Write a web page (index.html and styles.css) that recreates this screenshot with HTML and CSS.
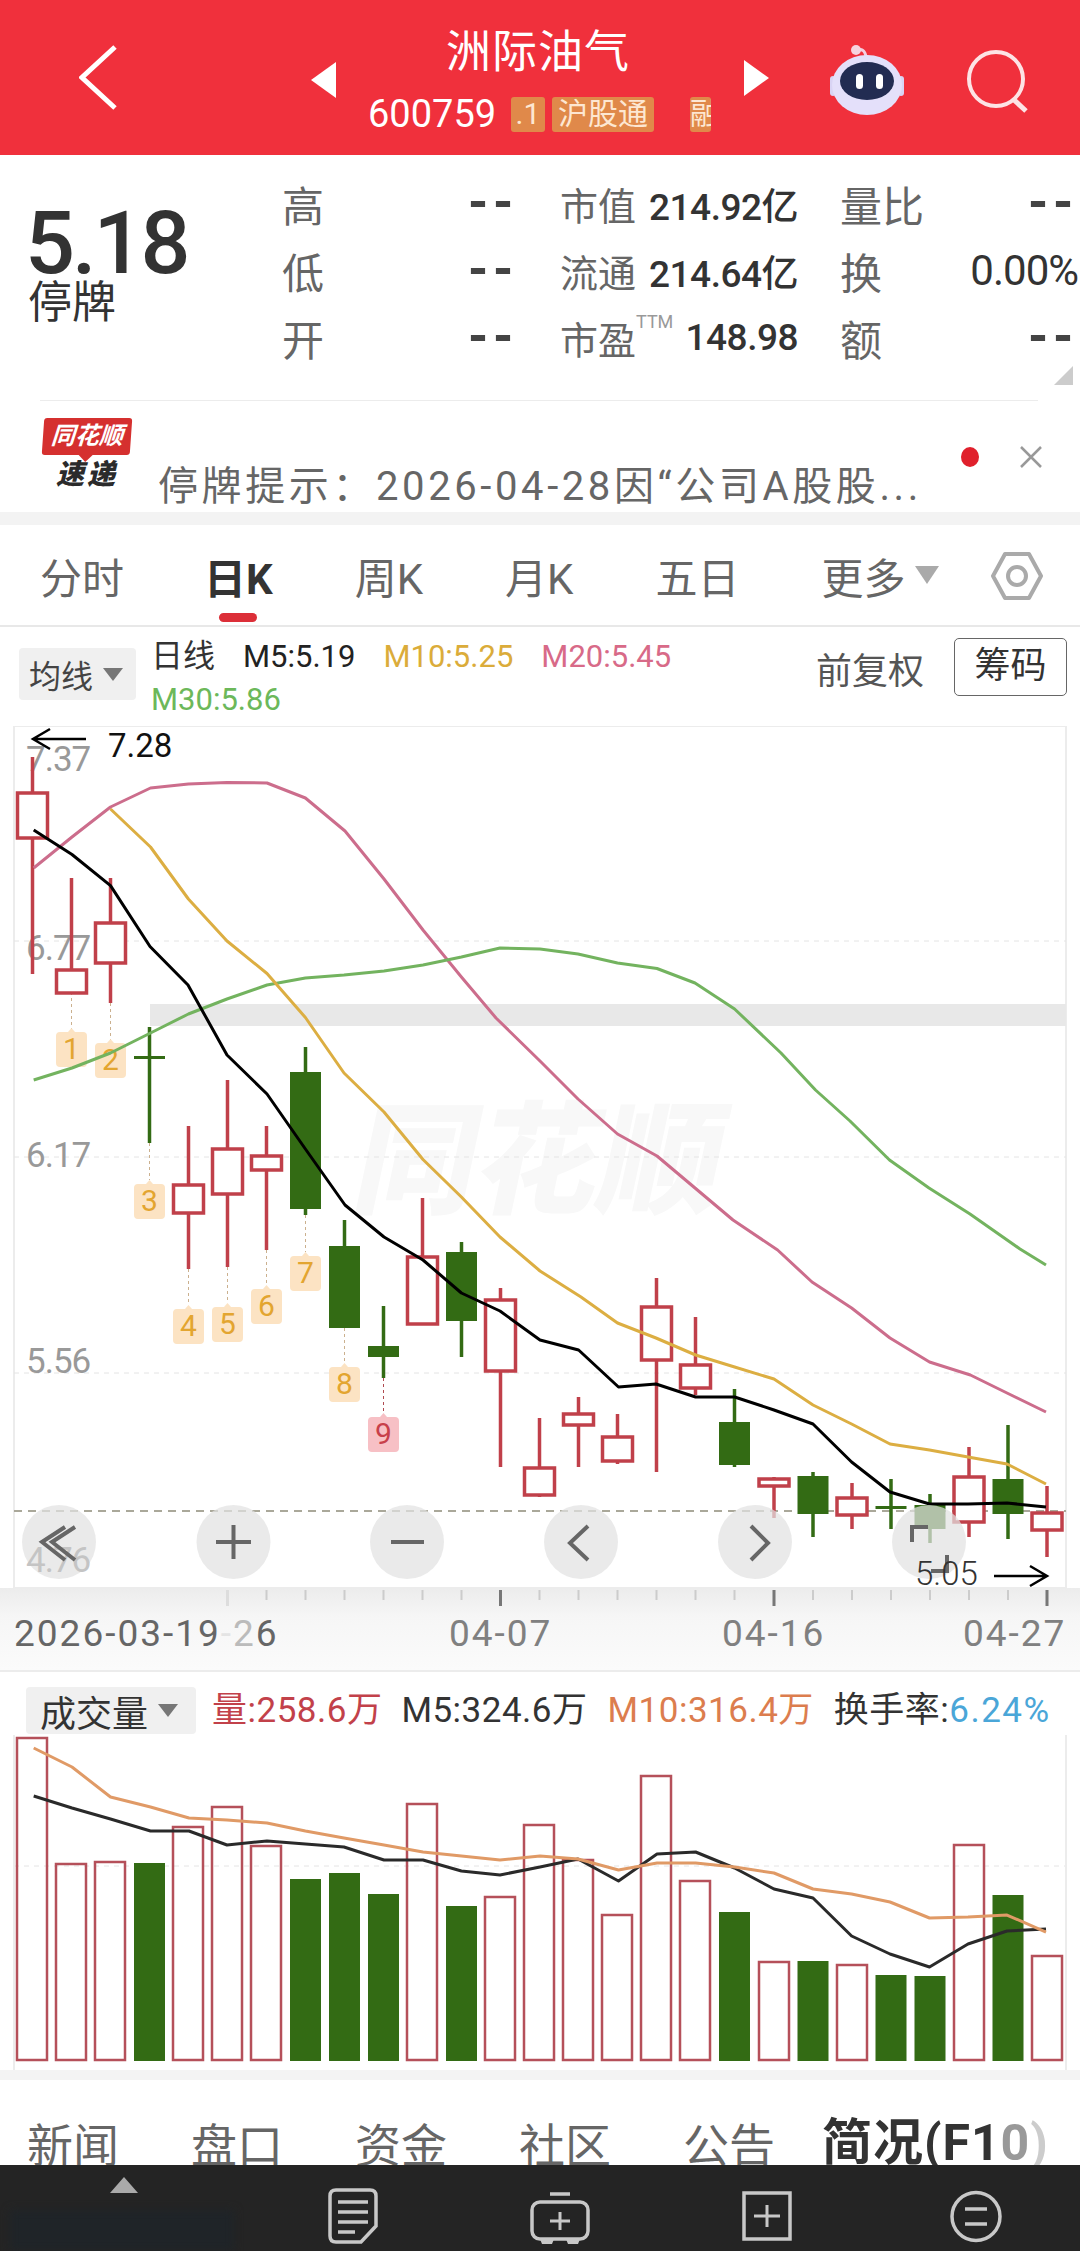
FILE: index.html
```html
<!DOCTYPE html>
<html lang="zh-CN">
<head>
  <meta charset="UTF-8">
  <meta name="viewport" content="width=device-width, initial-scale=1">
  <title>洲际油气 600759</title>
  <link rel="stylesheet" href="styles.css">
</head>
<body>
  <header class="topbar">
    <svg class="back" width="38" height="65" viewBox="0 0 38 65"><path d="M36 2 L3 32.5 L36 63" fill="none" stroke="#fff" stroke-width="5"/></svg>
    <svg class="prev" width="25" height="36" viewBox="0 0 25 36"><path d="M25 0 V36 L0 18 Z" fill="#fff"/></svg>
    <div class="stock">
      <div class="stock-name">洲际油气</div>
      <div class="stock-code">
        <span class="code">600759</span>
        <span class="tag tag-a">.1</span>
        <span class="tag tag-b">沪股通</span>
        <span class="tag tag-c">融</span>
      </div>
    </div>
    <svg class="next" width="25" height="36" viewBox="0 0 25 36"><path d="M0 0 V36 L25 18 Z" fill="#fff"/></svg>
    <svg class="robot" width="76" height="74" viewBox="0 0 76 74">
      <path d="M28 9 C32 6 36 8 37 15" fill="none" stroke="#f3cfe0" stroke-width="3"/>
      <circle cx="27" cy="8" r="5" fill="#f6d3df"/>
      <rect x="1" y="34" width="6" height="20" rx="3" fill="#d9d4f4"/>
      <rect x="69" y="34" width="6" height="20" rx="3" fill="#d9d4f4"/>
      <ellipse cx="38" cy="43" rx="35" ry="30" fill="#e4e0fa"/>
      <ellipse cx="38" cy="39" rx="27" ry="19" fill="#222c52"/>
      <rect x="27" y="32" width="7" height="15" rx="3.5" fill="#fff"/>
      <rect x="47" y="32" width="7" height="15" rx="3.5" fill="#fff"/>
    </svg>
    <svg class="search" width="64" height="64" viewBox="0 0 64 64"><circle cx="30" cy="30" r="27" fill="none" stroke="#fde3e5" stroke-width="4"/><path d="M47 50 L60 62" stroke="#fde3e5" stroke-width="5"/></svg>
  </header>

  <section class="quote">
    <div class="price">
      <div class="price-num">5.18</div>
      <div class="price-state">停牌</div>
    </div>
    <div class="stats">
      <div class="cell"><span class="lab">高</span><span class="dash">--</span></div>
      <div class="cell"><span class="lab-sm">市值</span><span class="val">214.92亿</span></div>
      <div class="cell"><span class="lab">量比</span><span class="dash">--</span></div>
      <div class="cell"><span class="lab">低</span><span class="dash">--</span></div>
      <div class="cell"><span class="lab-sm">流通</span><span class="val">214.64亿</span></div>
      <div class="cell"><span class="lab">换</span><span class="val val-big">0.00%</span></div>
      <div class="cell"><span class="lab">开</span><span class="dash">--</span></div>
      <div class="cell"><span class="lab-sm">市盈<sup class="ttm">TTM</sup></span><span class="val">148.98</span></div>
      <div class="cell"><span class="lab">额</span><span class="dash">--</span></div>
    </div>
    <span class="corner"></span>
  </section>

  <section class="notice">
    <div class="logo">
      <div class="logo-top">同花顺</div>
      <div class="logo-bot">速递</div>
    </div>
    <div class="notice-text">停牌提示：2026-04-28因“公司A股股...</div>
    <span class="notice-dot"></span>
    <svg class="notice-x" width="24" height="24" viewBox="0 0 24 24"><path d="M2 2 L22 22 M22 2 L2 22" stroke="#999" stroke-width="2.5"/></svg>
  </section>

  <div class="band"></div>

  <nav class="tabs">
    <span class="tab">分时</span>
    <span class="tab active">日K</span>
    <span class="tab">周K</span>
    <span class="tab">月K</span>
    <span class="tab">五日</span>
    <span class="tab more">更多<i class="tri"></i></span>
    <svg class="hex" width="52" height="50" viewBox="0 0 52 50"><path d="M14 3 H38 L50 25 L38 47 H14 L2 25 Z" fill="none" stroke="#aaa" stroke-width="4" stroke-linejoin="round"/><circle cx="26" cy="25" r="9" fill="none" stroke="#aaa" stroke-width="4"/></svg>
  </nav>

  <section class="legend">
    <div class="chip">均线<i class="tri tri-dark"></i></div>
    <div class="legend-text">
      <span class="leg leg-title">日线</span>
      <span class="leg leg-m5">M5:5.19</span>
      <span class="leg leg-m10">M10:5.25</span>
      <span class="leg leg-m20">M20:5.45</span>
      <span class="leg leg-m30">M30:5.86</span>
    </div>
    <span class="adjust">前复权</span>
    <span class="chips-btn">筹码</span>
  </section>

  <svg class="kchart" width="1080" height="944" viewBox="0 726 1080 944">
    <defs>
      <linearGradient id="axisbg" x1="0" y1="0" x2="0" y2="1">
        <stop offset="0" stop-color="#ececec"/>
        <stop offset="0.35" stop-color="#f6f6f6"/>
        <stop offset="1" stop-color="#fbfbfb"/>
      </linearGradient>
      <path id="flag" d="M4 4 L12 4 L15.5 0 L19 4 L27 4 Q31 4 31 8 V35 Q31 39 27 39 H4 Q0 39 0 35 V8 Q0 4 4 4 Z"/>
    </defs>

    <rect class="axis-bg" x="0" y="1588" width="1080" height="82"/>
    <rect class="frame" x="14" y="726" width="1052" height="862"/>
    <rect class="band-sr" x="150" y="1004" width="916" height="22"/>
    <text class="watermark" x="350" y="1204" transform="skewX(-12) translate(255 0)">同花顺</text>

    <line class="grid" x1="14" y1="941" x2="1066" y2="941"/>
    <line class="grid" x1="14" y1="1157" x2="1066" y2="1157"/>
    <line class="grid" x1="14" y1="1373" x2="1066" y2="1373"/>
    <line class="base" x1="14" y1="1511" x2="1066" y2="1511"/>

    <text class="ylab" x="26" y="771">7.37</text>
    <text class="ylab" x="26" y="960">6.77</text>
    <text class="ylab" x="26" y="1167">6.17</text>
    <text class="ylab" x="26" y="1373">5.56</text>

    <line class="link" x1="71.5" y1="992" x2="71.5" y2="1030"/>
    <line class="link" x1="110.5" y1="1003" x2="110.5" y2="1040"/>
    <line class="link" x1="149.5" y1="1143" x2="149.5" y2="1180"/>
    <line class="link" x1="188.5" y1="1269" x2="188.5" y2="1305"/>
    <line class="link" x1="227.5" y1="1267" x2="227.5" y2="1303"/>
    <line class="link" x1="266.5" y1="1250" x2="266.5" y2="1285"/>
    <line class="link" x1="305.5" y1="1215" x2="305.5" y2="1252"/>
    <line class="link" x1="344.5" y1="1328" x2="344.5" y2="1363"/>
    <line class="link link-red" x1="383.5" y1="1378" x2="383.5" y2="1413"/>

    <use class="flag" href="#flag" x="56" y="1028"/>
    <use class="flag" href="#flag" x="95" y="1039"/>
    <use class="flag" href="#flag" x="134" y="1180"/>
    <use class="flag" href="#flag" x="173" y="1305"/>
    <use class="flag" href="#flag" x="212" y="1303"/>
    <use class="flag" href="#flag" x="251" y="1285"/>
    <use class="flag" href="#flag" x="290" y="1252"/>
    <use class="flag" href="#flag" x="329" y="1363"/>
    <use class="flag flag-red" href="#flag" x="368" y="1413"/>
    <text class="flagnum" x="71.5" y="1059">1</text>
    <text class="flagnum" x="110.5" y="1070">2</text>
    <text class="flagnum" x="149.5" y="1211">3</text>
    <text class="flagnum" x="188.5" y="1336">4</text>
    <text class="flagnum" x="227.5" y="1334">5</text>
    <text class="flagnum" x="266.5" y="1316">6</text>
    <text class="flagnum" x="305.5" y="1283">7</text>
    <text class="flagnum" x="344.5" y="1394">8</text>
    <text class="flagnum flagnum-red" x="383.5" y="1444">9</text>

    <!-- candles: wick then body -->
    <g class="up"><line x1="32.5" y1="757" x2="32.5" y2="974"/><rect x="17.5" y="793" width="30" height="45"/></g>
    <g class="up"><line x1="71.5" y1="878" x2="71.5" y2="970"/><rect x="56.5" y="970" width="30" height="23"/></g>
    <g class="up"><line x1="110.5" y1="878" x2="110.5" y2="1003"/><rect x="95.5" y="923" width="30" height="40"/></g>
    <g class="down"><line x1="149.5" y1="1027" x2="149.5" y2="1143"/><rect x="134" y="1056" width="31" height="3"/></g>
    <g class="up"><line x1="188.5" y1="1126" x2="188.5" y2="1269"/><rect x="173.5" y="1185" width="30" height="28"/></g>
    <g class="up"><line x1="227.5" y1="1080" x2="227.5" y2="1267"/><rect x="212.5" y="1149" width="30" height="45"/></g>
    <g class="up"><line x1="266.5" y1="1126" x2="266.5" y2="1250"/><rect x="251.5" y="1156" width="30" height="14"/></g>
    <g class="down"><line x1="305.5" y1="1047" x2="305.5" y2="1215"/><rect x="290" y="1072" width="31" height="137"/></g>
    <g class="down"><line x1="344.5" y1="1220" x2="344.5" y2="1328"/><rect x="329" y="1246" width="31" height="82"/></g>
    <g class="down"><line x1="383.5" y1="1306" x2="383.5" y2="1378"/><rect x="368" y="1346" width="31" height="11"/></g>
    <g class="up"><line x1="422.5" y1="1198" x2="422.5" y2="1257"/><rect x="407.5" y="1257" width="30" height="67"/></g>
    <g class="down"><line x1="461.5" y1="1242" x2="461.5" y2="1357"/><rect x="446" y="1252" width="31" height="69"/></g>
    <g class="up"><line x1="500.5" y1="1288" x2="500.5" y2="1467"/><rect x="485.5" y="1300" width="30" height="71"/></g>
    <g class="up"><line x1="539.5" y1="1418" x2="539.5" y2="1497"/><rect x="524.5" y="1468" width="30" height="27"/></g>
    <g class="up"><line x1="578.5" y1="1397" x2="578.5" y2="1467"/><rect x="563.5" y="1414" width="30" height="11"/></g>
    <g class="up"><line x1="617.5" y1="1414" x2="617.5" y2="1464"/><rect x="602.5" y="1437" width="30" height="24"/></g>
    <g class="up"><line x1="656.5" y1="1278" x2="656.5" y2="1472"/><rect x="641.5" y="1307" width="30" height="53"/></g>
    <g class="up"><line x1="695.5" y1="1317" x2="695.5" y2="1395"/><rect x="680.5" y="1365" width="30" height="23"/></g>
    <g class="down"><line x1="734.5" y1="1389" x2="734.5" y2="1467"/><rect x="719" y="1422" width="31" height="43"/></g>
    <g class="up"><line x1="774" y1="1477" x2="774" y2="1518"/><rect x="759" y="1479" width="30" height="7"/></g>
    <g class="down"><line x1="813" y1="1472" x2="813" y2="1537"/><rect x="797.5" y="1476" width="31" height="38"/></g>
    <g class="up"><line x1="852" y1="1483" x2="852" y2="1529"/><rect x="837" y="1498" width="30" height="17"/></g>
    <g class="down"><line x1="891" y1="1479" x2="891" y2="1529"/><rect x="875.5" y="1506" width="31" height="3"/></g>
    <g class="down"><line x1="930" y1="1494" x2="930" y2="1543"/><rect x="914.5" y="1505" width="31" height="24"/></g>
    <g class="up"><line x1="969" y1="1447" x2="969" y2="1537"/><rect x="954" y="1477" width="30" height="45"/></g>
    <g class="down"><line x1="1008" y1="1425" x2="1008" y2="1539"/><rect x="992.5" y="1479" width="31" height="35"/></g>
    <g class="up"><line x1="1047" y1="1486" x2="1047" y2="1557"/><rect x="1032" y="1513" width="30" height="17"/></g>

    <polyline class="ma ma20" points="33.7,868 72,837 110.5,807 150.5,788 188.4,784 227,782.5 267,783 305.4,798 345,831 384,879 423,930 461.4,977 496,1018 540,1061 578,1099 617.5,1134 657,1156 695,1188 733,1220 777.6,1250 812,1282 851.6,1308 890,1338 929.5,1362 970.4,1375 1007,1393 1046,1412"/>
    <polyline class="ma ma30" points="33.7,1080 72,1068 110.5,1053 150.5,1033 188.4,1014 227,999 267,985 305.4,978 344,975 384,971 423,965 461.4,957 500,948 540,949 578,954 617.5,963 657,968.5 695,983 734.6,1009 781,1053 815.5,1090 850,1121 889.5,1160 929,1188 970,1214 1020,1249 1046,1265"/>
    <polyline class="ma ma10" points="110.5,809 150.5,847 188.4,899 227,941 267,973.5 305.4,1017.5 344,1073 384,1112 423,1159.5 461.4,1197 500,1237 540,1271 581,1297 617.5,1323 656,1338 695.6,1355 734.6,1367 774,1379 813,1405 851.6,1424 890,1444 929.5,1450 968,1457 1007,1464 1046,1484"/>
    <polyline class="ma ma5" points="33.7,830 72,854.5 110.5,885.6 150,946.5 188,985 227,1055 267,1094 305.4,1149 345,1205 384,1237 423,1260 461.4,1293 500,1311 540,1340 578.6,1350 618.5,1387 656,1384 695.6,1397 734.6,1397 774,1410 813,1424 851.6,1462 890,1492 929.5,1504 968,1504 1007,1503 1046,1507"/>

    <!-- floating chart buttons -->
    <circle class="round" cx="59" cy="1542" r="37"/>
    <circle class="round" cx="233.5" cy="1542" r="37"/>
    <circle class="round" cx="407" cy="1542" r="37"/>
    <circle class="round" cx="581" cy="1542" r="37"/>
    <circle class="round" cx="755" cy="1542" r="37"/>
    <circle class="round" cx="929" cy="1542" r="37"/>
    <text class="ylab ylab-low" x="26" y="1572">4.76</text>
    <path class="glyph" d="M65 1527 L42 1542 L65 1560 M75 1527 L52 1542 L75 1560"/>
    <path class="glyph" d="M216 1542 H251 M233.5 1525 V1559"/>
    <path class="glyph" d="M391 1542 H424"/>
    <path class="glyph" d="M588 1526 L570 1543 L588 1560"/>
    <path class="glyph" d="M751 1526 L768 1543 L751 1560"/>
    <path class="glyph" d="M912 1542 V1527 H928 M947 1555 V1571 H931"/>

    <!-- hand drawn arrows on the shot -->
    <path class="mark" d="M86 739 H34 M50 729 L33 739 L50 749"/>
    <text class="mark-text" x="108" y="757">7.28</text>
    <text class="mark-text mark-thin" x="915" y="1585">5.05</text>
    <path class="mark" d="M994 1576 H1046 M1030 1566 L1047 1576 L1030 1586"/>

    <!-- ticks under the chart -->
    <path class="tick tick-faint" d="M227.5 1590 V1606"/>
    <path class="tick" d="M266.5 1590 V1600 M305.5 1590 V1600 M344.5 1590 V1600 M383.5 1590 V1600 M422.5 1590 V1600 M461.5 1590 V1600 M539.5 1590 V1600 M578.5 1590 V1600 M617.5 1590 V1600 M656.5 1590 V1600 M695.5 1590 V1600 M734.5 1590 V1600 M813 1590 V1600 M852 1590 V1600 M891 1590 V1600 M930 1590 V1600 M969 1590 V1600 M1008 1590 V1600"/>
    <path class="tick tick-big" d="M500.5 1590 V1606 M774 1590 V1606 M1047 1590 V1606"/>
    <text class="xlab xlab-dark" x="14" y="1646">2026-03-19<tspan class="xlab-dash">-</tspan><tspan class="xlab-fade">2</tspan>6</text>
    <text class="xlab" x="449" y="1646">04-07</text>
    <text class="xlab" x="722" y="1646">04-16</text>
    <text class="xlab" x="963" y="1646">04-27</text>
  </svg>

  <section class="volume">
    <div class="vol-head">
      <div class="chip chip-vol">成交量<i class="tri tri-dark"></i></div>
      <span class="vol-item vol-now">量:258.6万</span>
      <span class="vol-item vol-m5">M5:324.6万</span>
      <span class="vol-item vol-m10">M10:316.4万</span>
      <span class="vol-item vol-rate">换手率:<b>6.24%</b></span>
    </div>
    <svg class="volchart" width="1080" height="335" viewBox="0 1735 1080 335">
      <line class="grid" x1="14" y1="1866" x2="1066" y2="1866"/>
      <line class="vol-edge" x1="14" y1="1735" x2="14" y2="2070"/>
      <line class="vol-edge" x1="1066" y1="1735" x2="1066" y2="2070"/>
      <g class="up vol">
        <rect x="17" y="1738" width="30" height="322"/>
        <rect x="56" y="1864" width="30" height="196"/>
        <rect x="95" y="1862" width="30" height="198"/>
        <rect x="173" y="1827" width="30" height="233"/>
        <rect x="212" y="1807" width="30" height="253"/>
        <rect x="251" y="1846" width="30" height="214"/>
        <rect x="407" y="1804" width="30" height="256"/>
        <rect x="485" y="1897" width="30" height="163"/>
        <rect x="524" y="1825" width="30" height="235"/>
        <rect x="563" y="1860" width="30" height="200"/>
        <rect x="602" y="1915" width="30" height="145"/>
        <rect x="641" y="1776" width="30" height="284"/>
        <rect x="680" y="1881" width="30" height="179"/>
        <rect x="759" y="1962" width="30" height="98"/>
        <rect x="837" y="1965" width="30" height="95"/>
        <rect x="954" y="1845" width="30" height="215"/>
        <rect x="1032" y="1956" width="30" height="104"/>
      </g>
      <g class="down">
        <rect x="134" y="1863" width="31" height="198"/>
        <rect x="290" y="1879" width="31" height="182"/>
        <rect x="329" y="1873" width="31" height="188"/>
        <rect x="368" y="1894" width="31" height="167"/>
        <rect x="446" y="1906" width="31" height="155"/>
        <rect x="719" y="1912" width="31" height="149"/>
        <rect x="797.5" y="1961" width="31" height="100"/>
        <rect x="875.5" y="1975" width="31" height="86"/>
        <rect x="914.5" y="1976" width="31" height="85"/>
        <rect x="992.5" y="1895" width="31" height="166"/>
      </g>
      <polyline class="ma vol-ma5" points="33.7,1796 72,1808 110.5,1819 150.5,1831 189,1831 227,1845 267,1841 305.4,1844 344,1847 384,1860 423,1860 461.4,1871 500,1875 540,1867 578,1859 618.5,1881 657,1854 695.6,1852 734.6,1868 774,1889 813,1898 851.6,1936 890,1954 929.5,1967 968,1944 1007,1931 1046,1929"/>
      <polyline class="ma vol-ma10" points="33.7,1748 72,1767 110.5,1797 150.5,1807 189,1818 227,1820 267,1823 305.4,1831 344,1838 384,1845 423,1852 461.4,1856 500,1860 540,1856 578,1859 618.5,1870 657,1863 695.6,1863 734.6,1867 774,1873 813,1889 851.6,1894 890,1902 929.5,1918 968,1917 1007,1915 1046,1932"/>
    </svg>
  </section>

  <div class="band band-thin"></div>

  <nav class="subtabs">
    <span class="subtab">新闻</span>
    <span class="subtab">盘口</span>
    <span class="subtab">资金</span>
    <span class="subtab">社区</span>
    <span class="subtab">公告</span>
    <span class="subtab active">简况(F1<i class="fade1">0</i><i class="fade2">)</i></span>
  </nav>

  <footer class="bottombar">
    <span class="up-tri"></span>
    <span class="blur-block"></span>
    <svg class="bar-ic ic-doc" width="50" height="56" viewBox="0 0 50 56"><path d="M8 2 H42 Q48 2 48 8 V38 L33 54 H8 Q2 54 2 48 V8 Q2 2 8 2 Z" fill="none" stroke="#c8c8c8" stroke-width="3.5"/><path d="M10 14 H40 M10 24 H40 M10 34 H40 M10 44 H27" stroke="#c8c8c8" stroke-width="3.5"/></svg>
    <svg class="bar-ic ic-bag" width="60" height="53" viewBox="0 0 60 53"><path d="M20 2 H40" stroke="#c8c8c8" stroke-width="3.5"/><rect x="2" y="10" width="56" height="37" rx="8" fill="none" stroke="#c8c8c8" stroke-width="3.5"/><path d="M10 47 L12 52 H22 L24 47 M36 47 L38 52 H48 L50 47" fill="#c8c8c8"/><path d="M30 20 V38 M20 29 H40" stroke="#c8c8c8" stroke-width="3"/></svg>
    <svg class="bar-ic ic-box" width="50" height="50" viewBox="0 0 50 50"><rect x="2" y="2" width="46" height="46" fill="none" stroke="#c8c8c8" stroke-width="3.5"/><path d="M25 14 V36 M12 25 H38" stroke="#c8c8c8" stroke-width="3"/></svg>
    <svg class="bar-ic ic-menu" width="52" height="53" viewBox="0 0 52 53"><circle cx="26" cy="26.5" r="24" fill="none" stroke="#c8c8c8" stroke-width="3.5"/><path d="M15 19 H37 M15 34 H37" stroke="#c8c8c8" stroke-width="3.5"/></svg>
  </footer>
</body>
</html>
```

FILE: styles.css
```css
* {
  box-sizing: border-box;
}

body {
  margin: 0;
  width: 1080px;
  height: 2251px;
  overflow: hidden;
  background: #fff;
  font-family: Roboto, "Noto Sans CJK SC", sans-serif;
  color: #333;
}

svg {
  display: block;
}

i {
  font-style: normal;
}

/* red header */
.topbar {
  height: 155px;
  background: #f0303c;
  display: flex;
  align-items: center;
  color: #fff;
}

.back {
  margin-left: 79px;
}

.prev {
  margin-left: 194px;
  margin-top: 4px;
}

.stock {
  width: 408px;
  padding-left: 32px;
  height: 155px;
}

.stock-name {
  margin-top: 24px;
  margin-left: 78px;
  font-size: 45px;
  line-height: 58px;
  letter-spacing: 1px;
}

.stock-code {
  display: flex;
  align-items: center;
  margin-top: 14px;
  height: 36px;
}

.code {
  font-size: 38px;
  width: 143px;
}

.tag {
  display: block;
  height: 35px;
  line-height: 34px;
  background: #e0894a;
  border-radius: 3px;
  font-size: 30px;
  text-align: center;
  overflow: hidden;
  color: #fde7d2;
}

.tag-a {
  width: 34px;
}

.tag-b {
  width: 102px;
  margin-left: 7px;
}

.tag-c {
  width: 21px;
  margin-left: 36px;
}

.robot {
  margin-left: 60px;
  margin-top: 2px;
}

.search {
  margin-left: 61px;
  margin-top: 6px;
}

/* quote stats */
.quote {
  position: relative;
  height: 245px;
  display: flex;
}

.price {
  width: 282px;
  padding-left: 25px;
  padding-top: 43px;
}

.price-num {
  font-size: 88px;
  font-weight: 500;
  line-height: 90px;
  letter-spacing: -3px;
}

.price-state {
  font-size: 44px;
  line-height: 48px;
  margin-top: -9px;
  margin-left: 3px;
}

.stats {
  margin-top: 15px;
  display: grid;
  grid-template-columns: 236px 238px 238px;
  grid-auto-rows: 67px;
  column-gap: 42px;
  height: 201px;
}

.cell {
  display: flex;
  align-items: center;
  justify-content: space-between;
  white-space: nowrap;
}

.lab {
  font-size: 42px;
  color: #666;
}

.lab-sm {
  font-size: 38px;
  color: #666;
  position: relative;
}

.ttm {
  position: absolute;
  left: 76px;
  top: 2px;
  font-size: 18px;
  line-height: 20px;
  color: #999;
}

.val {
  font-size: 37px;
  font-weight: 500;
  letter-spacing: -0.5px;
  color: #333;
}

.val-big {
  font-size: 42px;
  font-weight: 400;
  letter-spacing: -1px;
}

.dash {
  font-family: "Liberation Mono", monospace;
  font-weight: 700;
  font-size: 50px;
  letter-spacing: -5px;
  margin-right: 5px;
  color: #444;
}

.corner {
  position: absolute;
  right: 7px;
  bottom: 15px;
  width: 0;
  height: 0;
  border-left: 19px solid transparent;
  border-bottom: 19px solid #ccc;
}

/* news notice */
.notice {
  position: relative;
  height: 112px;
  display: flex;
}

.notice::before {
  content: "";
  position: absolute;
  left: 40px;
  right: 42px;
  top: 0;
  border-top: 1px solid #ececec;
}

.logo {
  width: 88px;
  margin-left: 43px;
  margin-top: 18px;
}

.logo-top {
  position: relative;
  height: 37px;
  background: #d5302f;
  border-radius: 3px;
  color: #fff;
  font-size: 24px;
  font-weight: 700;
  line-height: 37px;
  text-align: center;
  font-style: italic;
  transform: skewX(-4deg);
}

.logo-top::after {
  content: "";
  position: absolute;
  left: 37px;
  top: 37px;
  border-left: 7px solid transparent;
  border-right: 7px solid transparent;
  border-top: 7px solid #d5302f;
}

.logo-bot {
  margin-top: 4px;
  font-size: 28px;
  font-weight: 900;
  line-height: 32px;
  color: #2b2b2b;
  text-align: center;
  font-style: italic;
  letter-spacing: 3px;
}

.notice-text {
  margin-left: 27px;
  margin-top: 64px;
  font-size: 40px;
  line-height: 46px;
  letter-spacing: 3.6px;
  color: #666;
  white-space: nowrap;
  width: 790px;
}

.notice-dot {
  position: absolute;
  left: 961px;
  top: 47px;
  width: 18px;
  height: 20px;
  border-radius: 50%;
  background: #e0202c;
}

.notice-x {
  position: absolute;
  left: 1019px;
  top: 45px;
}

.band {
  height: 13px;
  background: #f3f3f3;
}

/* period tabs */
.tabs {
  position: relative;
  height: 102px;
  padding-left: 40px;
  display: flex;
  align-items: center;
  gap: 82px;
  border-bottom: 2px solid #e8e8e8;
}

.tab {
  font-size: 42px;
  color: #666;
  white-space: nowrap;
}

.tab.active {
  font-weight: 700;
  color: #333;
  position: relative;
  margin-left: -2px;
}

.tab.active::after {
  content: "";
  position: absolute;
  left: 15px;
  width: 38px;
  top: 68px;
  height: 9px;
  border-radius: 5px;
  background: #dc2f38;
}

.more {
  display: flex;
  align-items: center;
}

.tri {
  display: inline-block;
  width: 0;
  height: 0;
  margin-left: 10px;
  border-left: 12px solid transparent;
  border-right: 12px solid transparent;
  border-top: 18px solid #aaa;
}

.tri-dark {
  border-left-width: 10px;
  border-right-width: 10px;
  border-top: 13px solid #777;
}

.hex {
  position: absolute;
  left: 991px;
  top: 26px;
}

/* legend row */
.legend {
  position: relative;
  height: 99px;
}

.chip {
  display: inline-flex;
  align-items: center;
  background: #f0f0f0;
  border-radius: 4px;
  white-space: nowrap;
}

.legend > .chip {
  position: absolute;
  left: 19px;
  top: 21px;
  width: 117px;
  height: 52px;
  padding-left: 10px;
  font-size: 32px;
  color: #444;
}

.legend-text {
  position: absolute;
  left: 151px;
  top: 8px;
  width: 560px;
  display: flex;
  flex-wrap: wrap;
}

.leg {
  font-size: 31px;
  line-height: 43px;
  margin-right: 28px;
  white-space: nowrap;
}

.leg-title {
  font-size: 32px;
  color: #333;
}

.leg-m5 {
  color: #222;
}

.leg-m10 {
  color: #dbac3a;
}

.leg-m20 {
  color: #d86a88;
}

.leg-m30 {
  color: #6cb85a;
}

.adjust {
  position: absolute;
  left: 816px;
  top: 22px;
  font-size: 36px;
  line-height: 46px;
  color: #555;
}

.chips-btn {
  position: absolute;
  left: 954px;
  top: 11px;
  width: 113px;
  height: 58px;
  border: 1px solid #666;
  border-radius: 5px;
  font-size: 36px;
  line-height: 54px;
  text-align: center;
  color: #333;
}

/* kline */
.axis-bg {
  fill: url(#axisbg);
}

.frame {
  fill: #fff;
  stroke: #ececec;
  stroke-width: 2;
}

.band-sr {
  fill: #e8e8e8;
}

.watermark {
  font-size: 122px;
  font-weight: 900;
  fill: #f8f8f8;
}

.grid {
  stroke: #e4e4e4;
  stroke-width: 1;
  stroke-dasharray: 5 5;
}

.base {
  stroke: #aaa89a;
  stroke-width: 2;
  stroke-dasharray: 8 6;
}

.ylab {
  font-size: 35px;
  fill: #999;
  letter-spacing: -1px;
}

.ylab-low {
  fill: #c4c4c4;
}

.link {
  stroke: #cbb08e;
  stroke-width: 1;
  stroke-dasharray: 3 3;
}

.link-red {
  stroke: #b04a50;
}

.flag {
  fill: #fce3c3;
}

.flag-red {
  fill: #f7c0c5;
}

.flagnum {
  font-size: 30px;
  fill: #e3a530;
  text-anchor: middle;
}

.flagnum-red {
  fill: #c8404a;
}

.up line {
  stroke: #c0404a;
  stroke-width: 3.5;
}

.up rect {
  fill: #fff;
  stroke: #c0404a;
  stroke-width: 3.5;
}

.down line {
  stroke: #336b14;
  stroke-width: 3.5;
}

.down rect {
  fill: #336b14;
}

.vol rect {
  fill: none;
  stroke: #b5505a;
  stroke-width: 2.5;
}

.ma {
  fill: none;
  stroke-width: 3;
  stroke-linejoin: round;
}

.ma5 {
  stroke: #000;
}

.ma10 {
  stroke: #dcae42;
}

.ma20 {
  stroke: #cc6d8c;
}

.ma30 {
  stroke: #73b35f;
}

.round {
  fill: #e2e2e2;
  fill-opacity: 0.72;
}

.glyph {
  fill: none;
  stroke: #666;
  stroke-width: 4;
}

.mark {
  fill: none;
  stroke: #000;
  stroke-width: 2.5;
}

.mark-text {
  font-size: 33px;
  fill: #111;
}

.mark-thin {
  fill: #333;
  font-weight: 300;
}

.tick {
  stroke: #ccc;
  stroke-width: 2;
  fill: none;
}

.tick-faint {
  stroke: #ddd;
  stroke-width: 3;
}

.tick-big {
  stroke: #777;
  stroke-width: 3;
}

.xlab {
  font-size: 37px;
  fill: #808080;
  letter-spacing: 2px;
}

.xlab-dark {
  fill: #666;
}

.xlab-dash {
  fill: #e4e4e4;
}

.xlab-fade {
  fill: #bbb;
}

/* volume */
.volume {
  height: 400px;
  position: relative;
}

.vol-head {
  height: 65px;
  padding-left: 26px;
  padding-top: 15px;
  display: flex;
  align-items: flex-start;
  white-space: nowrap;
  border-top: 2px solid #ececec;
}

.chip-vol {
  width: 170px;
  height: 47px;
  padding-left: 14px;
  font-size: 36px;
  color: #333;
}

.vol-item {
  font-size: 35px;
  line-height: 47px;
  letter-spacing: 0.5px;
}

.vol-now {
  margin-left: 16px;
  color: #c2414a;
}

.vol-m5 {
  margin-left: 19px;
  color: #333;
}

.vol-m10 {
  margin-left: 20px;
  color: #dc7d4e;
}

.vol-rate {
  margin-left: 20px;
  color: #333;
}

.vol-rate b {
  font-weight: 400;
  letter-spacing: 1.5px;
  color: #4aa6d8;
}

.vol-edge {
  stroke: #ececec;
  stroke-width: 2;
}

.vol-ma5 {
  stroke: #2a2a2a;
}

.vol-ma10 {
  stroke: #e09a66;
}

.band-thin {
  height: 10px;
}

/* lower tabs */
.subtabs {
  height: 85px;
  padding-left: 27px;
  display: flex;
  gap: 72px;
  overflow: hidden;
}

.subtab {
  margin-top: 35px;
  font-size: 46px;
  line-height: 62px;
  color: #666;
  white-space: nowrap;
}

.subtab.active {
  font-size: 50px;
  font-weight: 700;
  letter-spacing: 1px;
  color: #333;
  margin-left: -25px;
  margin-top: 32px;
}

.fade1 {
  color: #999;
}

.fade2 {
  color: #ccc;
}

/* dark bar */
.bottombar {
  position: relative;
  height: 86px;
  background: #242424;
}

.up-tri {
  position: absolute;
  left: 110px;
  top: 12px;
  width: 0;
  height: 0;
  border-left: 14px solid transparent;
  border-right: 14px solid transparent;
  border-bottom: 16px solid #aaa;
}

.blur-block {
  position: absolute;
  left: 10px;
  top: 45px;
  width: 224px;
  height: 41px;
  background: #1f2428;
  filter: blur(4px);
}

.bar-ic {
  position: absolute;
}

.ic-doc {
  left: 328px;
  top: 23px;
}

.ic-bag {
  left: 530px;
  top: 27px;
}

.ic-box {
  left: 742px;
  top: 26px;
}

.ic-menu {
  left: 950px;
  top: 25px;
}
```
